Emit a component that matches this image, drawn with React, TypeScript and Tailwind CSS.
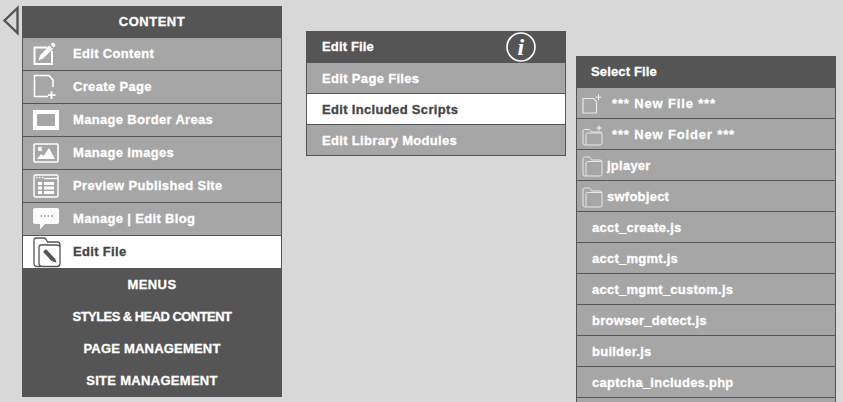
import { ReactNode } from "react";

const FONT = "font-['Liberation_Sans',Arial,sans-serif]";
const HEAVY = "[-webkit-text-stroke:0.3px_currentColor]";

const EditContentIcon = () => (
  <svg width="26" height="24" viewBox="0 0 26 24" fill="none">
    <path d="M19 9V22H1.500V5.500H14.500" stroke="#fff" strokeWidth="2" />
    <path d="M5.500 18.500L7 13.500L16.500 3.500L20 7L10 16.500Z" fill="#fff" />
    <path d="M17.500 2.500L19 1Q20 .3 21 1L22 2Q22.600 3 22 3.800L20.800 5.500Z" fill="#fff" />
  </svg>
);

const CreatePageIcon = () => (
  <svg width="26" height="26" viewBox="0 0 26 26" fill="none">
    <path d="M20 13V6L16 1.500H1.500V22.500H15" stroke="#fff" strokeWidth="1.600" />
    <path d="M18.500 17.500V25M15 21.200H22.500" stroke="#fff" strokeWidth="1.800" />
  </svg>
);

const BorderIcon = () => <div className="w-[26px] h-[20px] border-[4px] border-white" />;

const ImagesIcon = () => (
  <svg width="26" height="20" viewBox="0 0 26 20" fill="none">
    <rect x="1" y="1" width="24" height="18" rx="1" stroke="#fff" strokeWidth="1.600" />
    <circle cx="7" cy="6" r="2.200" fill="#fff" />
    <path d="M4 16L8 11L10.500 13L16 5L22 16Z" fill="#fff" />
  </svg>
);

const PreviewIcon = () => (
  <svg width="26" height="24" viewBox="0 0 26 24" fill="none">
    <rect x="1" y="1" width="24" height="22" rx="1.500" stroke="#fff" strokeWidth="1.400" />
    <path d="M11 4.500H25" stroke="#fff" strokeWidth="1.200" />
    <path d="M3 3.500H4.500M6 3.500H7.500M9 3.500H10.500" stroke="#fff" strokeWidth="1.400" />
    <path d="M5 8H9V11H5ZM5 12.500H9V15.500H5ZM5 17H9V20H5ZM11 8H21V11H11ZM11 12.500H21V15.500H11ZM11 17H21V20H11Z" fill="#fff" />
  </svg>
);

const BlogIcon = () => (
  <svg width="26" height="22" viewBox="0 0 26 22" fill="none">
    <path d="M2 0H24Q26 0 26 2V14Q26 16 24 16H12L7 21.500V16H2Q0 16 0 14V2Q0 0 2 0Z" fill="#fff" />
    <path d="M7.500 8H9M11 8H12.500M14.500 8H16M18 8H19.500" stroke="#8f8f8f" strokeWidth="1.500" />
  </svg>
);

const EditFileIcon = () => (
  <svg width="28" height="31" viewBox="0 0 28 31" fill="none">
    <path d="M7.500 29.500H4Q1 29.500 1 26.500V3Q1 1 3 1H11Q12.500 1 13.500 3L14.500 5H24.500Q27 5 27 8V26.500Q27 29.500 24 29.500H9Q6 29 6 26V10.500Q6 8 8 8H24Q26.500 8 27 10" stroke="#555" strokeWidth="1.300" />
    <path d="M11.500 13.500L20.500 23" stroke="#555" strokeWidth="4" />
    <path d="M19 24L22 21L23.500 25.800Z" fill="#555" />
  </svg>
);

const NewFileIcon = () => (
  <svg width="20" height="20" viewBox="0 0 20 20" fill="none">
    <path d="M1 4.500H11.500L14.500 7.500V19H1Z" stroke="#e8e8e8" strokeWidth="1.200" />
    <path d="M16.500 .5V6M13.700 3.200H19.300" stroke="#fff" strokeWidth="1" />
  </svg>
);

const NewFolderIcon = () => (
  <svg width="21" height="21" viewBox="0 0 21 21" fill="none">
    <path d="M5 20H3Q1 20 1 18V6Q1 4.500 2.500 4.500H7Q8 4.500 8.500 5.500L9.200 7H18Q20 7 20 9V18Q20 20 18 20H6Q4 20 4 18V9.500Q4 8 5.500 8H20" stroke="#e8e8e8" strokeWidth="1" />
    <path d="M17 .5V5.500M14.500 3H19.500" stroke="#fff" strokeWidth="1" />
  </svg>
);

const FolderIcon = () => (
  <svg width="21" height="21" viewBox="0 0 21 21" fill="none">
    <path d="M5 20H3Q1 20 1 18V2.500Q1 1 2.500 1H7Q8 1 8.500 2L9.500 4H18Q20 4 20 6V18Q20 20 18 20H6Q4 20 4 18V7Q4 5.500 5.500 5.500H20" stroke="#e8e8e8" strokeWidth="1" />
  </svg>
);

const Arrow = () => (
  <svg width="17" height="31" viewBox="0 0 17 31" fill="none" className="mt-[5px] ml-[2px]">
    <path d="M15.500 3L2.500 15.500L15.500 28Z" stroke="#555" strokeWidth="2.400" />
  </svg>
);

const InfoIcon = () => (
  <svg width="32" height="32" viewBox="0 0 32 32" fill="none" className="absolute right-[29px] top-0">
    <circle cx="16" cy="16" r="14" stroke="#fff" strokeWidth="1.600" />
    <text x="16" y="24" textAnchor="middle" fill="#fff" fontFamily="Liberation Serif, serif" fontStyle="italic" fontWeight="700" fontSize="24">i</text>
  </svg>
);

const sideItems: { label: string; icon: ReactNode; active?: boolean }[] = [
  { label: "Edit Content", icon: <EditContentIcon /> },
  { label: "Create Page", icon: <CreatePageIcon /> },
  { label: "Manage Border Areas", icon: <BorderIcon /> },
  { label: "Manage Images", icon: <ImagesIcon /> },
  { label: "Preview Published Site", icon: <PreviewIcon /> },
  { label: "Manage | Edit Blog", icon: <BlogIcon /> },
  { label: "Edit File", icon: <EditFileIcon />, active: true },
];

const fileItems: { label: string; icon?: ReactNode; isNew?: boolean }[] = [
  { label: "*** New File ***", icon: <NewFileIcon />, isNew: true },
  { label: "*** New Folder ***", icon: <NewFolderIcon />, isNew: true },
  { label: "jplayer", icon: <FolderIcon /> },
  { label: "swfobject", icon: <FolderIcon /> },
  { label: "acct_create.js" },
  { label: "acct_mgmt.js" },
  { label: "acct_mgmt_custom.js" },
  { label: "browser_detect.js" },
  { label: "builder.js" },
  { label: "captcha_includes.php" },
];

const Section = ({ label, track }: { label: string; track: string }) => (
  <div className={`h-[32px] flex items-center justify-center text-white text-[13px] font-bold ${HEAVY} ${track}`}>{label}</div>
);

const Row = ({ label, active }: { label: string; active?: boolean }) => (
  <div className={`h-[31px] pl-[15px] pt-[2px] flex items-center border-b border-[#555] text-[13px] font-bold tracking-[0.33px] ${HEAVY} ${active ? "bg-white text-[#444]" : "text-white"}`}>
    {label}
  </div>
);

export default function App() {
  return (
    <div className={`${FONT} h-[402px] w-[843px] overflow-hidden bg-[#d8d8d8] flex items-start`}>
      <div className="w-[22px] shrink-0">
        <Arrow />
      </div>

      <div className="w-[260px] mt-[6px] shrink-0 bg-[#555]">
        <Section label="CONTENT" track="tracking-[0.5px]" />
        <div className="bg-[#a6a6a6] border-x border-[#555]">
          {sideItems.map((item) => (
            <div
              key={item.label}
              className={`h-[33px] flex items-center border-b border-[#555] text-[13px] font-bold tracking-[0.33px] ${HEAVY} ${item.active ? "bg-white text-[#444]" : "text-white"}`}
            >
              <div className="w-[50px] pl-[10px] flex shrink-0">{item.icon}</div>
              {item.label}
            </div>
          ))}
        </div>
        <Section label="MENUS" track="tracking-[0.4px]" />
        <Section label="STYLES & HEAD CONTENT" track="tracking-[-0.55px]" />
        <Section label="PAGE MANAGEMENT" track="tracking-[0.2px]" />
        <Section label="SITE MANAGEMENT" track="tracking-[0.3px]" />
      </div>

      <div className="w-[260px] ml-[24px] mt-[31px] shrink-0">
        <div className={`relative h-[32px] bg-[#555] pl-[16px] flex items-center text-white text-[13px] font-bold tracking-[0.15px] ${HEAVY}`}>
          Edit File
          <InfoIcon />
        </div>
        <div className="bg-[#a6a6a6] border-x border-[#555]">
          <Row label="Edit Page Files" />
          <Row label="Edit Included Scripts" active />
          <Row label="Edit Library Modules" />
        </div>
      </div>

      <div className="w-[260px] h-[346px] ml-[10px] mt-[56px] shrink-0 flex flex-col">
        <div className={`h-[32px] shrink-0 bg-[#555] pl-[15px] flex items-center text-white text-[13px] font-bold tracking-[0.15px] ${HEAVY}`}>Select File</div>
        <div className="flex-1 bg-[#a6a6a6] border-x border-[#555]">
          {fileItems.map((file) => (
            <div key={file.label} className={`h-[31px] pt-[2px] flex items-center border-b border-[#555] text-white text-[13px] font-bold ${HEAVY} ${file.isNew ? "tracking-[0.85px]" : "tracking-[0.25px]"} ${file.icon ? "pl-[5px]" : "pl-[15px]"}`}>
              {file.icon && <div className={`shrink-0 flex ${file.isNew ? "w-[30px]" : "w-[25px]"}`}>{file.icon}</div>}
              {file.label}
            </div>
          ))}
        </div>
      </div>
    </div>
  );
}
